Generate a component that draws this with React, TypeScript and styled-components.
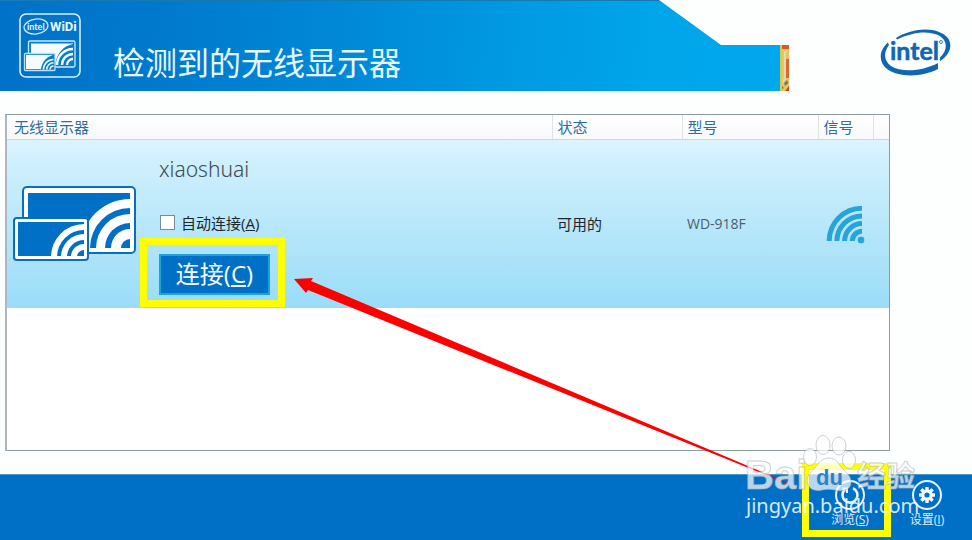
import React from "react";
import styled, { createGlobalStyle } from "styled-components";

const GlobalStyle = createGlobalStyle`
  *, *::before, *::after { box-sizing: border-box; }
  body {
    margin: 0;
    background: #fdfefe;
    font-family: "Open Sans", "Noto Sans CJK SC", sans-serif;
  }
  button { font-family: inherit; }
`;

const Page = styled.div`
  position: relative;
  display: flex;
  flex-direction: column;
  min-height: 100vh;
  overflow: hidden;
`;

const Header = styled.header`
  display: flex;
  align-items: stretch;
  height: 91px;
`;

const Banner = styled.div`
  flex: 1;
  display: flex;
  align-items: flex-start;
  gap: 32px;
  padding: 12px 0 0 19px;
  border-top: 1px solid #1579b5;
  background: linear-gradient(96deg, #0072c8 0%, #007acd 22%, #008ad8 46%, #0099e1 64%, #00a5ea 84%, #00a8ed 100%);
  clip-path: polygon(0 0, calc(100% - 121px) 0, calc(100% - 59px) 45px, 100% 45px, 100% 100%, 0 100%);
`;

const Title = styled.h1`
  margin: 24px 0 0;
  color: #e6f7ff;
  font-family: "Noto Sans CJK SC", sans-serif;
  font-size: 32px;
  line-height: 48px;
  font-weight: 400;
  white-space: nowrap;
`;

const Brand = styled.div`
  flex: 0 0 192px;
  display: flex;
  justify-content: space-between;
  align-items: flex-end;
  padding-right: 20px;
`;

const BrandLogo = styled.svg`
  margin-bottom: 13px;
`;

const Main = styled.main`
  flex: 1;
  display: flex;
  padding: 23px 82px 23px 5px;
`;

const Panel = styled.section`
  flex: 1;
  border: 1px solid #8d9ba4;
  border-left: 2px solid #aeb7bf;
  background: #fff;
`;

const Table = styled.table`
  width: 100%;
  table-layout: fixed;
  border-collapse: collapse;
`;

const HeadCell = styled.th<{ $width?: number; $first?: boolean }>`
  width: ${(p) => (p.$width ? `${p.$width}px` : "auto")};
  height: 24px;
  padding: 0 0 0 ${(p) => (p.$first ? 7 : 5)}px;
  border-left: ${(p) => (p.$first ? "0" : "1px solid #dde4e9")};
  border-bottom: 1px solid #b9dce6;
  background: linear-gradient(#fff, #f7f9fa);
  color: #2d6da3;
  font-size: 15px;
  line-height: 22px;
  font-weight: 400;
  text-align: left;
  white-space: nowrap;
`;

const DeviceRow = styled.tr`
  height: 169px;
  background: linear-gradient(#def4fd 0%, #d0f0fd 12%, #b6e6fa 55%, #9adcf8 100%);
`;

const Cell = styled.td`
  padding: 0 0 0 5px;
  color: #1d262b;
  font-size: 15px;
  line-height: 22px;
  vertical-align: middle;
`;

const DeviceCell = styled(Cell)`
  padding-left: 6px;
  vertical-align: top;
`;

const ModelCell = styled(Cell)`
  color: #4b5f69;
  font-size: 14px;
`;

const SignalCell = styled(Cell)`
  padding-left: 8px;
`;

const Device = styled.div`
  display: flex;
  gap: 22px;
`;

const DeviceIcon = styled.svg`
  flex: none;
  margin-top: 46px;
`;

const DeviceInfo = styled.div`
  display: flex;
  flex-direction: column;
  align-items: flex-start;
  padding-top: 13px;
`;

const DeviceName = styled.div`
  color: #3b4b53;
  font-family: "Noto Sans", sans-serif;
  font-size: 21px;
  line-height: 32px;
  font-weight: 300;
`;

const AutoLabel = styled.label`
  display: flex;
  align-items: center;
  gap: 6px;
  margin: 27px 0 20px 1px;
  color: #1d262b;
  font-size: 15px;
  line-height: 22px;
`;

const Tick = styled.input`
  appearance: none;
  width: 15px;
  height: 15px;
  margin: 0;
  border: 1px solid #7b8b94;
  background: #fff;
  &:checked { background: #0071c5; }
`;

const Highlighted = styled.div`
  position: relative;
  display: flex;
`;

const Highlight = styled.span<{ $inset: string }>`
  position: absolute;
  inset: ${(p) => p.$inset};
  border: 7px solid #ffff00;
  pointer-events: none;
`;

const ConnectButton = styled.button`
  width: 111px;
  height: 41px;
  padding: 0;
  border: 2px solid #18a5dd;
  background: #0070c6;
  color: #f4fbff;
  font-size: 24px;
  line-height: 36px;
`;

const Footer = styled.footer`
  display: flex;
  justify-content: flex-end;
  gap: 33px;
  height: 66px;
  padding: 4px 23px 0;
  border-top: 1px solid #4c9bbd;
  background: #0070c6;
`;

const ToolButton = styled.button`
  display: flex;
  flex-direction: column;
  align-items: center;
  width: 44px;
  padding: 0;
  border: 0;
  background: none;
  color: #dff0fb;
  font-size: 12px;
  line-height: 18px;
  white-space: nowrap;
`;

const Arrow = styled.svg`
  position: absolute;
  left: 294px;
  top: 277px;
  pointer-events: none;
`;

const Watermark = styled.svg`
  position: absolute;
  right: 51px;
  bottom: 14px;
  pointer-events: none;
`;

const SignalDrawing = styled.svg`
  display: block;
`;

const wave = (cx: number, cy: number, r: number) =>
  `M${cx - r} ${cy}A${r} ${r} 0 0 1 ${cx} ${cy - r}`;

function WidiLogo() {
  return (
    <svg width="62" height="66" viewBox="0 0 62 66" role="img" aria-label="Intel WiDi">
      <rect x="1" y="1" width="60" height="63" rx="6" fill="none" stroke="#d5f2fc" strokeWidth="1.6" />
      <ellipse cx="17" cy="13.5" rx="12" ry="7.5" fill="none" stroke="#c9edfb" strokeWidth="1.3" transform="rotate(-8 17 13.5)" />
      <text x="8" y="17" fill="#e4f7ff" fontFamily="Lato, sans-serif" fontWeight="700" fontSize="9">intel</text>
      <text x="31" y="18" fill="#e9f9ff" fontFamily="Roboto, sans-serif" fontWeight="700" fontSize="13">WiDi</text>
      <rect x="9.500" y="28" width="46.500" height="26" rx="1.500" fill="#087bc9" stroke="#c6eaf8" strokeWidth="1.3" />
      <path d="M12 30.500H54V31C45 33 38 39 36 52H12Z" fill="#f5fcff" />
      <g fill="none" stroke="#f2fbff" strokeWidth="2.400">
        <path d={wave(54, 52, 16)} /><path d={wave(54, 52, 11)} /><path d={wave(54, 52, 6)} />
      </g>
      <rect x="5.500" y="40.500" width="30.500" height="17" rx="1" fill="#087bc9" stroke="#b9e4f6" strokeWidth="1.3" />
      <path d="M7 42H34C27 44 23 49 22 56H7Z" fill="#f5fcff" />
      <g fill="none" stroke="#e9f8ff" strokeWidth="1.600">
        <path d={wave(34.5, 56.5, 10)} /><path d={wave(34.5, 56.5, 6.8)} /><path d={wave(34.5, 56.5, 3.5)} />
      </g>
    </svg>
  );
}

function EdgeStrip() {
  return (
    <svg width="9" height="46" viewBox="0 0 9 46" aria-hidden="true">
      <rect width="9" height="46" fill="#eec35a" />
      <rect width="1.500" height="46" fill="#c7cf49" />
      <path d="M2 0H9V4H2Z" fill="#d9572e" />
      <path d="M6 14H9V33H6Z" fill="#dd672e" />
      <path d="M7 6Q4 5 5 15V29Q5 35 3 37" fill="none" stroke="#dcddc0" strokeWidth="1.800" />
      <path d="M4 38L7 35L8.500 38L5 41Z" fill="#5a8880" />
      <path d="M2 41L4 43L2 44Z" fill="#7b7960" />
      <path d="M5 46L9 41V46Z" fill="#dd3c1d" />
    </svg>
  );
}

function IntelLogo() {
  return (
    <BrandLogo width="72" height="50" viewBox="0 0 72 50" role="img" aria-label="Intel">
      <path
        d="M16 10C29 2 47 -1 59 4C75 10 73 25 60 33V29.500C68 22 68 12 58 7C47 2 31 4.500 17 11.500Z"
        fill="#0f66b4"
      />
      <path
        d="M8 14.500C-1 22 -2 34 7 41C19 50 43 49 58 41V35C43 43 22 45 11 38C4 33 3 25 9 17Z"
        fill="#0f66b4"
      />
      <text x="10" y="32" fill="#0f66b4" stroke="#0f66b4" strokeWidth=".5" fontFamily="Lato, sans-serif" fontWeight="700" fontSize="25">intel</text>
      <circle cx="61" cy="14" r="1.500" fill="none" stroke="#0f66b4" strokeWidth=".8" />
    </BrandLogo>
  );
}

function ScreensIcon() {
  return (
    <DeviceIcon width="124" height="77" viewBox="0 0 124 77" aria-hidden="true">
      <clipPath id="large"><rect x="15" y="8" width="102" height="56" /></clipPath>
      <clipPath id="small"><rect x="5" y="36" width="66" height="34" /></clipPath>
      <rect x="9" y="0" width="114" height="68" rx="5" fill="#0b6dbd" />
      <rect x="11" y="2" width="110" height="64" rx="3" fill="#fff" />
      <rect x="15" y="7" width="102" height="55" fill="#0070c6" />
      <g clipPath="url(#large)">
        <circle cx="117" cy="62" r="49" fill="#fff" />
        <circle cx="117" cy="62" r="40" fill="#0070c6" />
        <circle cx="117" cy="62" r="34" fill="#fff" />
        <circle cx="117" cy="62" r="25" fill="#0070c6" />
        <circle cx="117" cy="62" r="19" fill="#fff" />
        <circle cx="117" cy="62" r="9" fill="#0070c6" />
        <rect x="15" y="62" width="102" height="3" fill="#fff" />
      </g>
      <rect x="0" y="31" width="76" height="44" rx="4" fill="#0b6dbd" />
      <rect x="2" y="33" width="72" height="40" rx="2" fill="#fff" />
      <rect x="5" y="36" width="66" height="34" fill="#0070c6" />
      <g clipPath="url(#small)">
        <circle cx="71" cy="71" r="33" fill="#fff" />
        <circle cx="71" cy="71" r="27" fill="#0070c6" />
        <circle cx="71" cy="71" r="23" fill="#fff" />
        <circle cx="71" cy="71" r="17" fill="#0070c6" />
        <circle cx="71" cy="71" r="13" fill="#fff" />
        <circle cx="71" cy="71" r="7" fill="#0070c6" />
      </g>
    </DeviceIcon>
  );
}

function SignalIcon() {
  return (
    <SignalDrawing width="40" height="40" viewBox="0 0 40 40" role="img" aria-label="信号强">
      <g fill="none" stroke="#28a4dc" strokeWidth="5">
        <path d={wave(36, 37, 32.8)} /><path d={wave(36, 37, 25.1)} />
        <path d={wave(36, 37, 17.4)} /><path d={wave(36, 37, 9.7)} />
      </g>
      <circle cx="35" cy="36" r="4" fill="#28a4dc" stroke="#b0e4fa" strokeWidth="1" />
    </SignalDrawing>
  );
}

function RefreshIcon() {
  return (
    <svg width="32" height="32" viewBox="0 0 32 32" fill="none" stroke="#e6f5ff" aria-hidden="true">
      <circle cx="16" cy="16" r="14" strokeWidth="2" />
      <path d="M19 9.200A7.500 7.500 0 1 1 11 10.500" strokeWidth="2.600" />
      <path d="M8.500 9.500H13V14" strokeWidth="2" />
    </svg>
  );
}

function GearIcon() {
  return (
    <svg width="32" height="32" viewBox="0 0 32 32" aria-hidden="true">
      <circle cx="16" cy="16" r="14" fill="none" stroke="#e6f5ff" strokeWidth="2" />
      <g fill="#f3faff">
        {[0, 45, 90, 135].map((a) => (
          <rect key={a} x="14.300" y="8" width="3.400" height="16" rx=".6" transform={`rotate(${a} 16 16)`} />
        ))}
        <circle cx="16" cy="16" r="5.800" />
      </g>
      <circle cx="16" cy="16" r="2.600" fill="#0070c6" />
    </svg>
  );
}

function BaiduMark() {
  return (
    <Watermark width="176" height="92" viewBox="0 0 176 92" role="img" aria-label="Baidu 经验 jingyan.baidu.com">
      <g fill="#fff" fillOpacity=".72" stroke="#a9b3b8" strokeOpacity=".6" strokeWidth="1">
        <text x="0" y="55" fontFamily="Liberation Sans, sans-serif" fontWeight="700" fontSize="40">Bai</text>
        <ellipse cx="65" cy="23" rx="6.500" ry="8.500" />
        <ellipse cx="78" cy="11" rx="7" ry="9.500" />
        <ellipse cx="94" cy="12" rx="7" ry="9" />
        <ellipse cx="104" cy="26" rx="6.500" ry="8.500" />
        <path d="M73 30C79 22 89 22 94 30C98 37 106 40 106 48C106 56 98 58 90 56C86 55 81 55 77 56C69 58 62 54 62 46C63 39 69 36 73 30Z" />
        <text x="112" y="53" fontFamily="Noto Sans CJK SC, sans-serif" fontWeight="700" fontSize="29">经验</text>
      </g>
      <text x="71" y="51" fill="#2b82c9" fontFamily="Liberation Sans, sans-serif" fontWeight="700" fontSize="22">du</text>
      <text x="1" y="79" fill="#fff" fillOpacity=".86" fontFamily="Noto Sans, sans-serif" fontSize="20">jingyan.baidu.com</text>
    </Watermark>
  );
}

export default function App() {
  return (
    <Page>
      <GlobalStyle />
      <Header>
        <Banner>
          <WidiLogo />
          <Title>检测到的无线显示器</Title>
        </Banner>
        <Brand>
          <EdgeStrip />
          <IntelLogo />
        </Brand>
      </Header>
      <Main>
        <Panel>
          <Table>
            <thead>
              <tr>
                <HeadCell $first>无线显示器</HeadCell>
                <HeadCell $width={130}>状态</HeadCell>
                <HeadCell $width={136}>型号</HeadCell>
                <HeadCell $width={55}>信号</HeadCell>
                <HeadCell $width={16} aria-hidden="true" />
              </tr>
            </thead>
            <tbody>
              <DeviceRow>
                <DeviceCell>
                  <Device>
                    <ScreensIcon />
                    <DeviceInfo>
                      <DeviceName>xiaoshuai</DeviceName>
                      <AutoLabel>
                        <Tick type="checkbox" />
                        <span>自动连接(<u>A</u>)</span>
                      </AutoLabel>
                      <Highlighted>
                        <ConnectButton type="button">连接(<u>C</u>)</ConnectButton>
                        <Highlight $inset="-16px -15px -12px -19px" />
                      </Highlighted>
                    </DeviceInfo>
                  </Device>
                </DeviceCell>
                <Cell>可用的</Cell>
                <ModelCell>WD-918F</ModelCell>
                <SignalCell colSpan={2}><SignalIcon /></SignalCell>
              </DeviceRow>
            </tbody>
          </Table>
        </Panel>
      </Main>
      <Footer>
        <Highlighted>
          <ToolButton type="button">
            <RefreshIcon />
            <span>浏览(<u>S</u>)</span>
          </ToolButton>
          <Highlight $inset="-16px -19px 3px -26px" />
        </Highlighted>
        <ToolButton type="button">
          <GearIcon />
          <span>设置(<u>I</u>)</span>
        </ToolButton>
      </Footer>
      <Arrow width="500" height="210" viewBox="0 0 500 210" aria-hidden="true">
        <path d="M0 2L19 1L17 4L494 206V207L14 13L12 16Z" fill="#ff0000" />
      </Arrow>
      <BaiduMark />
    </Page>
  );
}
